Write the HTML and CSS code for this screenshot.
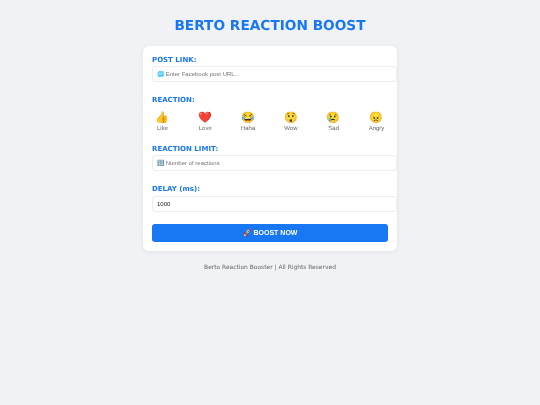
FILE: index.html
```html
<!DOCTYPE html>
<html lang="en">
<head>
<meta charset="utf-8">
<title>Berto Reaction Boost</title>
<link rel="stylesheet" href="styles.css">
</head>
<body>
<h1 class="title">BERTO REACTION BOOST</h1>
<main class="card">
  <label class="label">POST LINK:</label>
  <input class="field" type="text" placeholder="🌐 Enter Facebook post URL...">
  <label class="label label-gap">REACTION:</label>
  <div class="reactions">
    <div class="reaction"><span class="emoji">👍</span><span class="name">Like</span></div>
    <div class="reaction"><span class="emoji">❤️</span><span class="name">Love</span></div>
    <div class="reaction"><span class="emoji">😂</span><span class="name">Haha</span></div>
    <div class="reaction"><span class="emoji">😲</span><span class="name">Wow</span></div>
    <div class="reaction"><span class="emoji">😢</span><span class="name">Sad</span></div>
    <div class="reaction"><span class="emoji">😠</span><span class="name">Angry</span></div>
  </div>
  <label class="label">REACTION LIMIT:</label>
  <input class="field" type="text" placeholder="🔢 Number of reactions">
  <label class="label label-delay">DELAY (ms):</label>
  <input class="field" type="text" value="1000">
  <button class="boost" type="button">🚀 BOOST NOW</button>
</main>
<footer class="footer">Berto Reaction Booster | All Rights Reserved</footer>
</body>
</html>
```
FILE: styles.css
```css
* { box-sizing: border-box; }
html, body { height: 100%; }
html { background: #f0f2f5; }
body {
  margin: 0;
  background: #f0f2f5;
  font-family: "Liberation Sans", Arial, sans-serif;
  display: flex;
  flex-direction: column;
  align-items: center;
  padding-top: 16px;
  text-rendering: geometricPrecision;
  filter: blur(0.3px);
}
.title {
  margin: 0 0 10px;
  font: bold 13.7px/20px "DejaVu Sans", Verdana, sans-serif;
  color: #1877f2;
}
.card {
  width: 254px;
  height: 205px;
  background: #fff;
  border-radius: 6px;
  padding: 9px;
  box-shadow: 0 1px 5px rgba(0, 0, 0, 0.07);
}
.label {
  display: block;
  font: bold 7px/11px "DejaVu Sans", Verdana, sans-serif;
  color: #1877f2;
}
.label-gap { margin-top: 13px; }
.label-delay { margin-top: 13px; margin-bottom: 1px; }
.field {
  display: block;
  width: 245px;
  height: 16px;
  padding: 0 4px;
  border: 1px solid #eceef1;
  border-radius: 3px;
  background: #fff;
  font: 6px "Liberation Sans", Arial, sans-serif;
  color: #222;
  outline: none;
}
.field::placeholder { color: #757575; opacity: 1; }
.reactions {
  display: flex;
  justify-content: space-between;
  height: 22px;
  margin: 5px 0 11px;
  padding-right: 1px;
}
.reaction {
  display: flex;
  flex-direction: column;
  align-items: center;
  width: 21px;
}
.emoji { font-size: 11px; line-height: 14px; }
.name { font-size: 6px; line-height: 8px; color: #65676b; }
.boost {
  display: block;
  width: 100%;
  height: 18px;
  margin-top: 12px;
  border: 0;
  border-radius: 3px;
  background: #1877f2;
  color: #fff;
  font: bold 7px "Liberation Sans", Arial, sans-serif;
}
.footer {
  margin-top: 12px;
  font: 5.95px/9px "DejaVu Sans", Verdana, sans-serif;
  color: #65676b;
}
```
